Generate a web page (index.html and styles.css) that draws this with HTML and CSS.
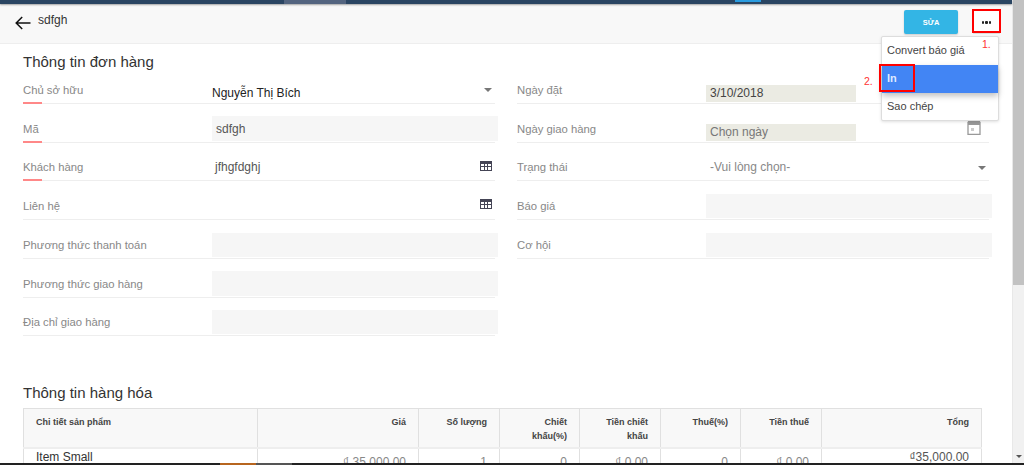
FILE: index.html
```html
<!DOCTYPE html>
<html lang="vi">
<head>
<meta charset="utf-8">
<title>sdfgh</title>
<link rel="stylesheet" href="styles.css">
</head>
<body>
<div class="screen">
  <div class="window">
    <div class="main">
      <div class="topbar"><span class="tab"></span><span class="topmark"></span></div>
      <header class="header">
        <svg class="back" width="16" height="14" viewBox="0 0 16 14"><path d="M15.5 7H1.5M7.2 1L1.2 7l6 6" fill="none" stroke="#111" stroke-width="1.5"/></svg>
        <span class="title">sdfgh</span>
        <button class="edit">SỬA</button>
        <div class="more">
          <button class="dots"><i></i><i></i><i></i></button>
          <span class="mark mark-more"></span>
          <span class="note note-one">1.</span>
          <div class="menu">
            <div class="item">Convert báo giá</div>
            <div class="item active">In</div>
            <div class="item">Sao chép</div>
            <span class="mark mark-in"></span>
            <span class="note note-two">2.</span>
          </div>
        </div>
      </header>
      <main class="content">
        <h2 class="heading">Thông tin đơn hàng</h2>
        <div class="form">
          <div class="col">
            <div class="row"><label class="label req">Chủ sở hữu</label><div class="val select dark">Nguyễn Thị Bích<span class="caret"></span></div></div>
            <div class="row"><label class="label req">Mã</label><div class="val box">sdfgh</div></div>
            <div class="row"><label class="label req">Khách hàng</label><div class="val lookup">jfhgfdghj<svg class="grid-icon" width="12" height="10" viewBox="0 0 12 10"><path d="M0 0h12v10H0z" fill="#445"/><path d="M1 3h3v2H1zM5 3h2v2H5zM8 3h3v2H8zM1 6h3v3H1zM5 6h2v3H5zM8 6h3v3H8z" fill="#fff"/></svg></div></div>
            <div class="row"><label class="label">Liên hệ</label><div class="val lookup"><svg class="grid-icon" width="12" height="10" viewBox="0 0 12 10"><path d="M0 0h12v10H0z" fill="#445"/><path d="M1 3h3v2H1zM5 3h2v2H5zM8 3h3v2H8zM1 6h3v3H1zM5 6h2v3H5zM8 6h3v3H8z" fill="#fff"/></svg></div></div>
            <div class="row"><label class="label">Phương thức thanh toán</label><div class="val box"></div></div>
            <div class="row"><label class="label">Phương thức giao hàng</label><div class="val box"></div></div>
            <div class="row"><label class="label">Địa chỉ giao hàng</label><div class="val box"></div></div>
          </div>
          <div class="col">
            <div class="row"><label class="label">Ngày đặt</label><div class="val date">3/10/2018</div></div>
            <div class="row"><label class="label">Ngày giao hàng</label><div class="val date muted">Chọn ngày<svg class="cal" width="14" height="15" viewBox="0 0 14 15"><path d="M1 2.5h12v12H1z" fill="#fff" stroke="#999" stroke-width="1.3"/><path d="M1 1h12v4H1z" fill="#999"/><path d="M4 8h3v3H4z" fill="#ccc"/></svg></div></div>
            <div class="row"><label class="label">Trạng thái</label><div class="val select placeholder">-Vui lòng chọn-<span class="caret"></span></div></div>
            <div class="row"><label class="label">Báo giá</label><div class="val box"></div></div>
            <div class="row"><label class="label">Cơ hội</label><div class="val box"></div></div>
          </div>
        </div>
        <h2 class="heading heading-items">Thông tin hàng hóa</h2>
        <table class="items">
          <thead>
            <tr>
              <th class="c-name">Chi tiết sản phẩm</th>
              <th class="c-price">Giá</th>
              <th class="c-qty">Số lượng</th>
              <th class="c-disc">Chiết khấu(%)</th>
              <th class="c-discv">Tiền chiết khấu</th>
              <th class="c-tax">Thuế(%)</th>
              <th class="c-taxv">Tiền thuế</th>
              <th class="c-total">Tổng</th>
            </tr>
          </thead>
          <tbody>
            <tr>
              <td class="name">Item Small</td>
              <td>₫ 35,000.00</td>
              <td>1</td>
              <td>0</td>
              <td>₫ 0.00</td>
              <td>0</td>
              <td>₫ 0.00</td>
              <td class="total">₫35,000.00</td>
            </tr>
          </tbody>
        </table>
      </main>
    </div>
    <div class="scrollbar"><div class="thumb"></div><div class="track"><span class="arrow"></span></div></div>
  </div>
  <div class="taskbar"><span class="task"></span><span class="task task-dim"></span></div>
</div>
</body>
</html>
```

FILE: styles.css
```css
* { box-sizing: border-box; }
html, body { margin: 0; height: 100%; overflow: hidden; background: #fff; }
body { font-family: "Liberation Sans", Arial, sans-serif; color: #333; }

.screen { height: 465px; display: flex; flex-direction: column; }
.window { flex: 1; min-height: 0; display: flex; }
.main { flex: 1; min-width: 0; display: flex; flex-direction: column; }

.topbar { height: 4px; flex: none; background: #2a4562; display: flex; box-shadow: 0 1px 2px rgba(0,0,0,.35); position: relative; }
.tab { width: 62px; margin-left: 284px; background: #53647f; }
.topmark { width: 26px; height: 2px; margin-left: 389px; background: #2a9ce0; }

.header { height: 40px; flex: none; display: flex; align-items: flex-start; background: #f8f8f8; border-bottom: 1px solid #eee; padding: 6px 12px 0 15px; }
.back { margin-top: 6px; }
.title { margin: 3px 0 0 7px; font-size: 12px; line-height: 15px; color: #333; }
.edit { margin-left: auto; width: 54px; height: 24px; border: 0; border-radius: 2px; background: #33b5e5; color: #fff; font: bold 7.5px "Liberation Sans", Arial, sans-serif; box-shadow: 0 1px 2px rgba(0,0,0,.18); padding: 0; }
.more { position: relative; margin-left: 15px; width: 27px; }
.dots { width: 27px; height: 24px; display: flex; gap: 1px; align-items: center; justify-content: center; background: #fff; border: 1px solid #ddd; padding: 0; }
.dots i { width: 2.5px; height: 3px; border-radius: 1px; background: #222; }

.mark { position: absolute; border: 2px solid #f00; }
.mark-more { left: -1px; top: -1px; width: 29px; height: 24px; }
.note { position: absolute; color: #f33; font-size: 10.5px; line-height: 12px; font-family: "Liberation Sans", Arial, sans-serif; }
.note-one { left: 9px; top: 28px; z-index: 3; }
.note-two { left: -18px; top: 38px; }

.menu { position: absolute; z-index: 2; top: 26px; right: 1px; width: 118px; height: 85px; background: #fff; border: 1px solid #ddd; border-radius: 2px; box-shadow: 0 1px 3px rgba(0,0,0,.12); }
.item { height: 28px; padding: 0 5px; font-size: 11px; line-height: 26px; color: #444; }
.item.active { background: #4285f4; color: #dfe9ff; font-weight: bold; box-shadow: 0 3px 6px rgba(0,0,0,.25); position: relative; line-height: 27px; }
.mark-in { left: -3px; top: 27px; width: 36px; height: 28px; z-index: 1; }

.content { flex: 1; min-height: 0; overflow: hidden; padding: 8px 0 0 23px; }
.heading { margin: 0; font-size: 15px; line-height: 20px; font-weight: normal; color: #333; }
.heading-items { margin-top: 47px; }

.form { display: grid; grid-template-columns: 472px 472px; column-gap: 22px; margin-top: -7px; }
.row { height: 38.75px; display: grid; grid-template-columns: 189px 1fr; border-bottom: 1px solid #eee; position: relative; }
.label { align-self: end; margin-bottom: 5px; font-size: 11.3px; line-height: 15px; color: #888; }
.label.req::after { content: ""; position: absolute; left: 0; bottom: -1px; width: 19px; height: 2px; background: #f88; }

.val { position: relative; font-size: 12px; color: #555; display: flex; align-items: center; }
.box { background: #f6f6f6; margin: 12.5px -3px 1px 0; padding: 1px 4px 0; }
.select { padding: 18px 0 0; }
.select.dark { color: #222; }
.select.placeholder { color: #888; margin-bottom: 4px; padding: 16px 0 0 4px; }
.caret { position: absolute; right: 3px; top: 23px; border: 4px solid transparent; border-top: 4px solid #777; border-bottom: 0; }
.lookup { padding: 15px 0 0 3px; color: #555; margin-bottom: 4px; }
.grid-icon { position: absolute; right: 3px; top: 18px; }
.date { background: #ebebe3; width: 150px; margin: 20px 0 1px; padding: 0 4px; color: #444; }
.muted { color: #777; }
.cal { position: absolute; left: 261px; top: -4px; }

.items { width: 958px; table-layout: fixed; border-collapse: collapse; margin-top: 5px; font-size: 9px; }
.items th { height: 39px; padding: 7px 12px 0; background: #f8f8f8; border: 1px solid #e0e0e0; border-bottom: 2px solid #eee; text-align: right; vertical-align: top; font-weight: bold; color: #444; line-height: 13.5px; }
.items th.c-name { text-align: left; }
.items td { height: 40px; padding: 6px 12px 0; border: 1px solid #e0e0e0; text-align: right; vertical-align: top; font-size: 12px; color: #888; }
.items td.name { text-align: left; color: #333; padding-top: 1px; }
.items td.total { color: #555; padding-top: 1px; }
.c-name { width: 234px; }
.c-price { width: 161px; }
.c-qty { width: 81px; }
.c-disc { width: 80px; }
.c-discv { width: 81px; }
.c-tax { width: 80px; }
.c-taxv { width: 81px; }
.c-total { width: 160px; }

.scrollbar { width: 12px; flex: none; display: flex; flex-direction: column; border-left: 1px solid #e8e8e8; }
.thumb { height: 285px; background: #c2c2c2; }
.track { flex: 1; background: #f1f1f1; position: relative; }
.arrow { position: absolute; left: 3px; bottom: 5px; border: 3px solid transparent; border-top: 3px solid #555; border-bottom: 0; }

.taskbar { height: 2px; flex: none; background: #222; display: flex; }
.task { width: 36px; margin-left: 220px; background: #b7651f; }
.task-dim { margin-left: 0; background: #555; }
```
